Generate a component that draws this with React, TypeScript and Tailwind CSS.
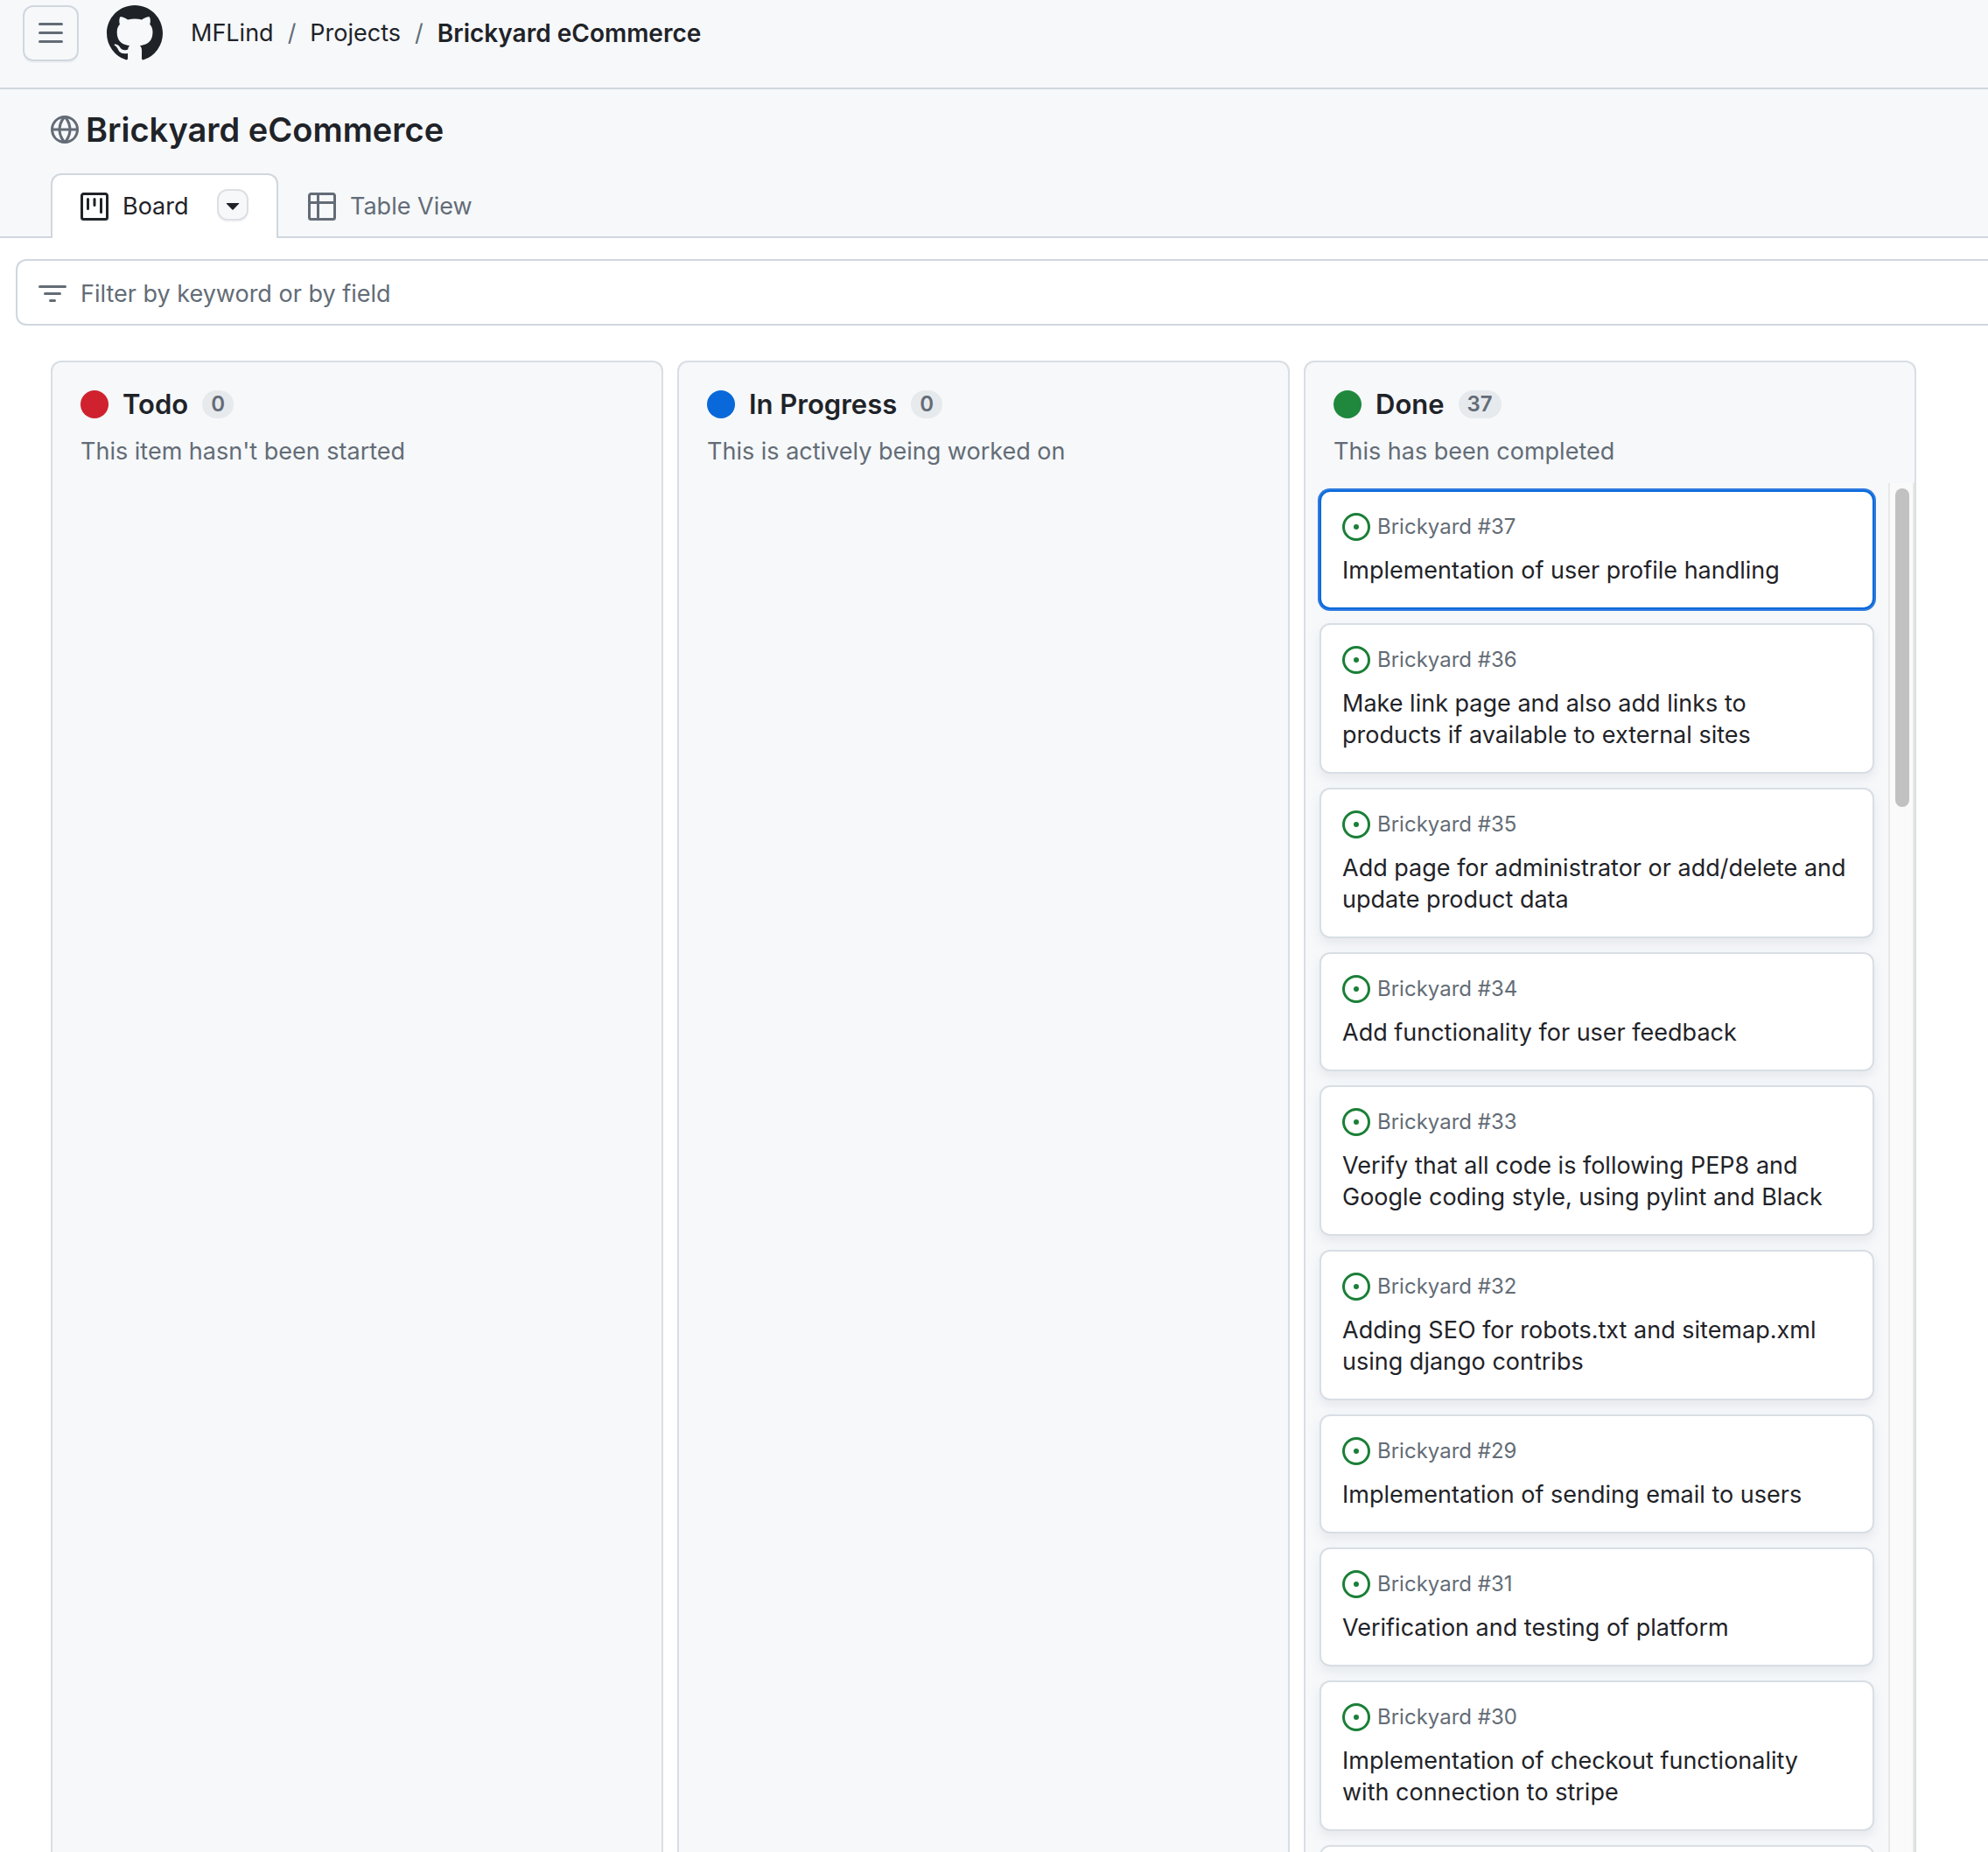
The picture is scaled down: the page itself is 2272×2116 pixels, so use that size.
import React from "react";

const PATHS = {
  bars: "M1 2.75A.75.75 0 0 1 1.75 2h12.5a.75.75 0 0 1 0 1.5H1.75A.75.75 0 0 1 1 2.75Zm0 5A.75.75 0 0 1 1.75 7h12.5a.75.75 0 0 1 0 1.5H1.75A.75.75 0 0 1 1 7.75ZM1.75 12h12.5a.75.75 0 0 1 0 1.5H1.75a.75.75 0 0 1 0-1.5Z",
  github:
    "M8 0c4.42 0 8 3.58 8 8a8.013 8.013 0 0 1-5.45 7.59c-.4.08-.55-.17-.55-.38 0-.27.01-1.13.01-2.2 0-.75-.25-1.23-.54-1.48 1.78-.2 3.65-.88 3.65-3.95 0-.88-.31-1.59-.82-2.15.08-.2.36-1.02-.08-2.12 0 0-.67-.22-2.2.82-.64-.18-1.32-.27-2-.27-.68 0-1.36.09-2 .27-1.53-1.03-2.2-.82-2.2-.82-.44 1.1-.16 1.92-.08 2.12-.51.56-.82 1.28-.82 2.15 0 3.06 1.86 3.75 3.64 3.95-.23.2-.44.55-.51 1.07-.46.21-1.61.55-2.33-.66-.15-.24-.6-.83-1.23-.82-.67.01-.27.38.01.53.34.19.73.9.82 1.13.16.45.68 1.31 2.69.94 0 .67.01 1.3.01 1.49 0 .21-.15.45-.55.38A7.995 7.995 0 0 1 0 8c0-4.42 3.58-8 8-8Z",
  globe:
    "M8 0a8 8 0 1 1 0 16A8 8 0 0 1 8 0ZM5.78 8.75a9.64 9.64 0 0 0 1.363 4.177c.255.426.542.832.857 1.215.245-.296.551-.705.857-1.215A9.64 9.64 0 0 0 10.22 8.75Zm4.44-1.5a9.64 9.64 0 0 0-1.363-4.177c-.307-.51-.612-.919-.857-1.215a9.927 9.927 0 0 0-.857 1.215A9.64 9.64 0 0 0 5.78 7.25Zm-5.944 1.5H1.543a6.507 6.507 0 0 0 4.666 5.5c-.123-.181-.24-.365-.352-.552-.715-1.192-1.437-2.874-1.581-4.948Zm-2.733-1.5h2.733c.144-2.074.866-3.756 1.58-4.948.12-.197.237-.381.353-.552a6.507 6.507 0 0 0-4.666 5.5Zm10.181 1.5c-.144 2.074-.866 3.756-1.58 4.948-.12.197-.237.381-.353.552a6.507 6.507 0 0 0 4.666-5.5Zm2.733-1.5a6.507 6.507 0 0 0-4.666-5.5c.123.181.24.365.353.552.714 1.192 1.436 2.874 1.58 4.948Z",
  project:
    "M1.75 0h12.5C15.216 0 16 .784 16 1.75v12.5A1.75 1.75 0 0 1 14.25 16H1.75A1.75 1.75 0 0 1 0 14.25V1.75C0 .784.784 0 1.75 0ZM1.5 1.75v12.5c0 .138.112.25.25.25h12.5a.25.25 0 0 0 .25-.25V1.75a.25.25 0 0 0-.25-.25H1.75a.25.25 0 0 0-.25.25ZM11.75 3a.75.75 0 0 1 .75.75v7.5a.75.75 0 0 1-1.5 0v-7.5a.75.75 0 0 1 .75-.75Zm-8.25.75a.75.75 0 0 1 1.5 0v5.5a.75.75 0 0 1-1.5 0ZM8 3a.75.75 0 0 1 .75.75v3.5a.75.75 0 0 1-1.5 0v-3.5A.75.75 0 0 1 8 3Z",
  table:
    "M0 1.75C0 .784.784 0 1.75 0h12.5C15.216 0 16 .784 16 1.75v12.5A1.75 1.75 0 0 1 14.25 16H1.75A1.75 1.75 0 0 1 0 14.25ZM6.5 6.5v8h7.75a.25.25 0 0 0 .25-.25V6.5Zm8-1.5V1.75a.25.25 0 0 0-.25-.25H6.5V5Zm-13 1.5v7.75c0 .138.112.25.25.25H5v-8ZM5 5V1.5H1.75a.25.25 0 0 0-.25.25V5Z",
  filter:
    "M.75 3h14.5a.75.75 0 0 1 0 1.5H.75a.75.75 0 0 1 0-1.5ZM3 7.75A.75.75 0 0 1 3.75 7h8.5a.75.75 0 0 1 0 1.5h-8.5A.75.75 0 0 1 3 7.75Zm3 4a.75.75 0 0 1 .75-.75h2.5a.75.75 0 0 1 0 1.5h-2.5a.75.75 0 0 1-.75-.75Z",
  triangle:
    "m4.427 7.427 3.396 3.396a.25.25 0 0 0 .354 0l3.396-3.396A.25.25 0 0 0 11.396 7H4.604a.25.25 0 0 0-.177.427Z",
  issue:
    "M8 9.5a1.5 1.5 0 1 0 0-3 1.5 1.5 0 0 0 0 3ZM8 0a8 8 0 1 1 0 16A8 8 0 0 1 8 0ZM1.5 8a6.5 6.5 0 1 0 13 0 6.5 6.5 0 0 0-13 0Z",
};

function Icon({ name, className = "size-8" }: { name: keyof typeof PATHS; className?: string }) {
  return (
    <svg viewBox="0 0 16 16" fill="currentColor" aria-hidden="true" className={`shrink-0 ${className}`}>
      <path d={PATHS[name]} />
    </svg>
  );
}

type Card = { id: number; title: string };

const DONE: Card[] = [
  { id: 37, title: "Implementation of user profile handling" },
  { id: 36, title: "Make link page and also add links to products if available to external sites" },
  { id: 35, title: "Add page for administrator or add/delete and update product data" },
  { id: 34, title: "Add functionality for user feedback" },
  { id: 33, title: "Verify that all code is following PEP8 and Google coding style, using pylint and Black" },
  { id: 32, title: "Adding SEO for robots.txt and sitemap.xml using django contribs" },
  { id: 29, title: "Implementation of sending email to users" },
  { id: 31, title: "Verification and testing of platform" },
  { id: 30, title: "Implementation of checkout functionality with connection to stripe" },
];

const COLUMNS = [
  { name: "Todo", count: 0, text: "This item hasn't been started", dot: "bg-[#cf222e]", cards: [] as Card[] },
  { name: "In Progress", count: 0, text: "This is actively being worked on", dot: "bg-[#0969da]", cards: [] as Card[] },
  { name: "Done", count: 37, text: "This has been completed", dot: "bg-[#1f883d]", cards: DONE },
];

function IssueCard({ card, active }: { card: Card; active: boolean }) {
  return (
    <article
      className={`shrink-0 rounded-xl border-2 bg-white px-6 py-6 ${
        active
          ? "border-[#0969da] ring-2 ring-[#2f7be0]"
          : "border-[#d8dee4] shadow-[0_6px_12px_rgba(140,149,159,0.15)]"
      }`}
    >
      <div className="flex h-8 items-center gap-2 text-[#1a7f37]">
        <Icon name="issue" />
        <span className="text-2xl text-[#636c76]">Brickyard #{card.id}</span>
      </div>
      <a href="#" className="mt-4 block">
        {card.title}
      </a>
    </article>
  );
}

export default function App() {
  return (
    <div className="flex h-screen flex-col overflow-hidden bg-white font-['Inter',sans-serif] text-[27px] leading-9 text-[#1f2328]">
      <header className="flex shrink-0 items-center border-b-2 border-[#d0d7de] bg-[#f6f8fa] px-[26px] pt-1.5 pb-[30px]">
        <button
          type="button"
          aria-label="Open menu"
          className="flex size-16 items-center justify-center rounded-xl border-2 border-[#d0d7de] text-[#636c76] shadow-[0_2px_0_rgba(31,35,40,0.04)]"
        >
          <Icon name="bars" />
        </button>
        <a href="#" aria-label="GitHub" className="ml-8">
          <Icon name="github" className="size-16" />
        </a>
        <nav aria-label="Breadcrumb" className="ml-8 flex items-center gap-4">
          <a href="#">MFLind</a>
          <span className="text-[#636c76]">/</span>
          <a href="#">Projects</a>
          <span className="text-[#636c76]">/</span>
          <a href="#" className="text-[28px] font-semibold">
            Brickyard eCommerce
          </a>
        </nav>
      </header>

      <div className="shrink-0 bg-[#f6f8fa]">
        <div className="flex items-center gap-2 px-[58px] pt-6 pb-[28px]">
          <Icon name="globe" className="size-8 text-[#636c76]" />
          <h1 className="text-[38px] leading-11 font-semibold">Brickyard eCommerce</h1>
        </div>
        <nav aria-label="Views" className="flex items-end">
          <div className="w-[58px] self-stretch border-b-2 border-[#d0d7de]" />
          <div className="flex h-[74px] w-[260px] items-center rounded-t-xl border-2 border-b-0 border-[#d0d7de] bg-white pl-8">
            <a href="#" className="flex items-center gap-4">
              <Icon name="project" />
              Board
            </a>
            <button
              type="button"
              aria-label="View options"
              className="mr-8 mb-1 ml-auto flex size-9 items-center justify-center rounded-xl border-2 border-[#dcdfe3] bg-[#f6f8fa] shadow-[0_2px_0_rgba(31,35,40,0.04)]"
            >
              <Icon name="triangle" />
            </button>
          </div>
          <div className="flex h-[74px] flex-1 items-center border-b-2 border-[#d0d7de] pt-1 pl-[34px] text-[#636c76]">
            <a href="#" className="flex items-center gap-4">
              <Icon name="table" />
              Table View
            </a>
          </div>
        </nav>
      </div>

      <label className="mt-6 ml-[18px] flex h-[76px] shrink-0 items-center gap-4 rounded-l-xl border-2 border-r-0 border-[#d0d7de] pt-1 pl-6 text-[#636c76]">
        <Icon name="filter" />
        <input
          type="text"
          aria-label="Filter by keyword or by field"
          placeholder="Filter by keyword or by field"
          className="min-w-0 flex-1 bg-transparent outline-none placeholder:text-[#636c76]"
        />
      </label>

      <main className="mt-10 flex min-h-0 flex-1 gap-4 px-[58px]">
        {COLUMNS.map((column) => (
          <section
            key={column.name}
            className="flex w-[700px] shrink-0 flex-col rounded-t-xl border-2 border-b-0 border-[#d8dee4] bg-[#f6f8fa]"
          >
            <div className="px-8 pt-8 pb-[18px]">
              <div className="flex h-8 items-center gap-4">
                <span className={`size-8 rounded-full ${column.dot}`} />
                <h2 className="text-[31px] font-semibold">{column.name}</h2>
                <span className="flex h-8 items-center rounded-full bg-[#e7eaed] px-2.5 text-2xl font-semibold text-[#636c76]">
                  {column.count}
                </span>
              </div>
              <p className="mt-5 text-[#636c76]">{column.text}</p>
            </div>
            {column.cards.length > 0 && (
              <div className="flex min-h-0 flex-1">
                <div className="flex min-w-0 flex-1 flex-col gap-4 overflow-hidden px-4 pt-2">
                  {column.cards.map((card, i) => (
                    <IssueCard key={card.id} card={card} active={i === 0} />
                  ))}
                  <div className="h-[136px] shrink-0 rounded-xl border-2 border-[#d8dee4] bg-white" />
                </div>
                <div className="w-[30px] border-x-2 border-[#e8e8e8] bg-[#fafafa] pt-1.5 pl-1.5">
                  <div className="h-[364px] w-4 rounded-full bg-[#c1c1c1]" />
                </div>
              </div>
            )}
          </section>
        ))}
      </main>
    </div>
  );
}
